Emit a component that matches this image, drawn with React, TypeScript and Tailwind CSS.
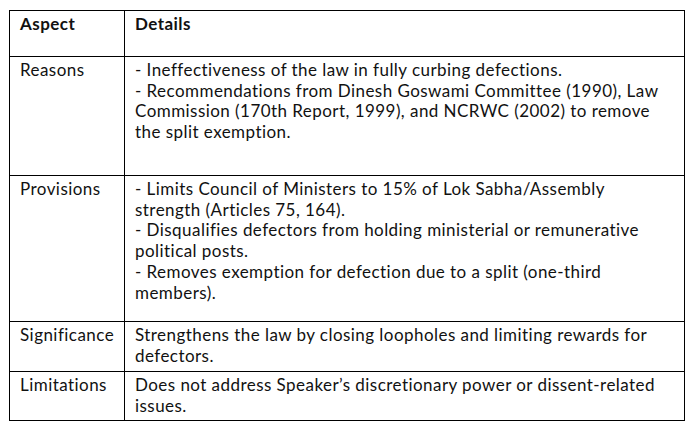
import React from "react";

interface Row {
  aspect: string;
  lines: string[];
  height: string;
}

const rows: Row[] = [
  {
    aspect: "Reasons",
    lines: [
      "- Ineffectiveness of the law in fully curbing defections.",
      "- Recommendations from Dinesh Goswami Committee (1990), Law",
      "Commission (170th Report, 1999), and NCRWC (2002) to remove",
      "the split exemption.",
    ],
    height: "h-[119px]",
  },
  {
    aspect: "Provisions",
    lines: [
      "- Limits Council of Ministers to 15% of Lok Sabha/Assembly",
      "strength (Articles 75, 164).",
      "- Disqualifies defectors from holding ministerial or remunerative",
      "political posts.",
      "- Removes exemption for defection due to a split (one-third",
      "members).",
    ],
    height: "h-[146px]",
  },
  {
    aspect: "Significance",
    lines: [
      "Strengthens the law by closing loopholes and limiting rewards for",
      "defectors.",
    ],
    height: "h-[50px]",
  },
  {
    aspect: "Limitations",
    lines: [
      "Does not address Speaker\u2019s discretionary power or dissent-related",
      "issues.",
    ],
    height: "h-[49px]",
  },
];

const App = () => {
  return (
    <div className="w-[698px] h-[435px] bg-white pt-[10px] pl-[9px] text-[#111] font-['Lato','Liberation_Sans',sans-serif] text-[17px] leading-[20.7px] tracking-[0.45px]">
      <table className="w-[676px] border-collapse table-fixed">
        <colgroup>
          <col className="w-[115px]" />
          <col />
        </colgroup>
        <thead>
          <tr className="h-[46px]">
            <th className="border border-black align-top text-left font-bold pl-[10px] pt-[3px]">
              Aspect
            </th>
            <th className="border border-black align-top text-left font-bold pl-[10px] pt-[3px]">
              Details
            </th>
          </tr>
        </thead>
        <tbody>
          {rows.map((row) => (
            <tr key={row.aspect} className={row.height}>
              <td className="border border-black align-top pl-[10px] pt-[3px] whitespace-nowrap">
                {row.aspect}
              </td>
              <td className="border border-black align-top pl-[10px] pt-[3px]">
                {row.lines.map((line) => (
                  <div key={line} className="whitespace-nowrap">
                    {line}
                  </div>
                ))}
              </td>
            </tr>
          ))}
        </tbody>
      </table>
    </div>
  );
};

export default App;
